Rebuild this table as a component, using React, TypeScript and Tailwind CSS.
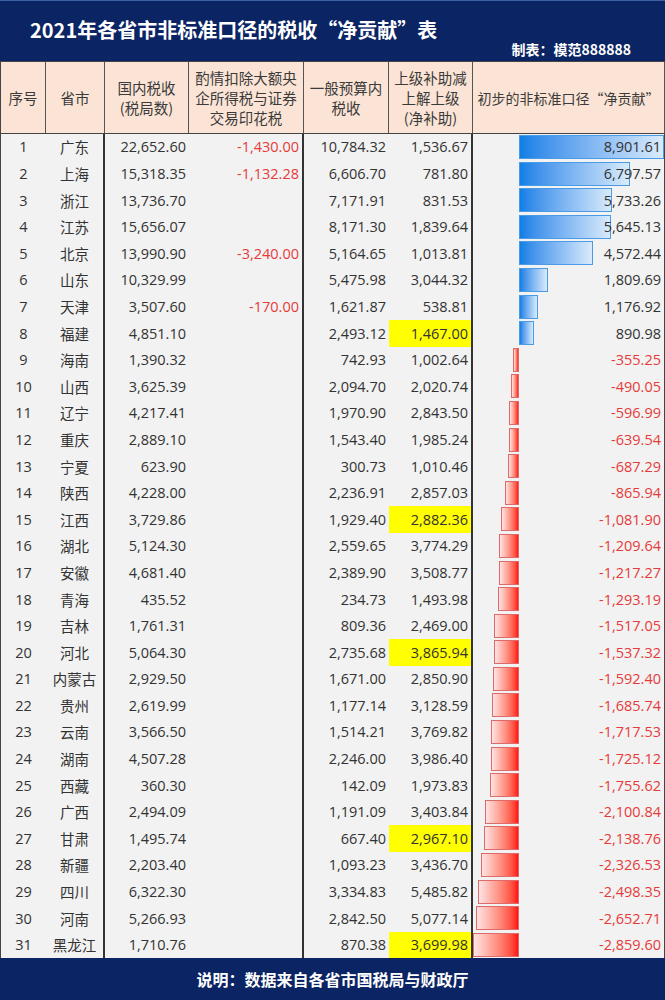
const rows: [number, string, string, string, string, string, boolean, number][] = [
  [1, "广东", "22,652.60", "-1,430.00", "10,784.32", "1,536.67", false, 8901.61],
  [2, "上海", "15,318.35", "-1,132.28", "6,606.70", "781.80", false, 6797.57],
  [3, "浙江", "13,736.70", "", "7,171.91", "831.53", false, 5733.26],
  [4, "江苏", "15,656.07", "", "8,171.30", "1,839.64", false, 5645.13],
  [5, "北京", "13,990.90", "-3,240.00", "5,164.65", "1,013.81", false, 4572.44],
  [6, "山东", "10,329.99", "", "5,475.98", "3,044.32", false, 1809.69],
  [7, "天津", "3,507.60", "-170.00", "1,621.87", "538.81", false, 1176.92],
  [8, "福建", "4,851.10", "", "2,493.12", "1,467.00", true, 890.98],
  [9, "海南", "1,390.32", "", "742.93", "1,002.64", false, -355.25],
  [10, "山西", "3,625.39", "", "2,094.70", "2,020.74", false, -490.05],
  [11, "辽宁", "4,217.41", "", "1,970.90", "2,843.50", false, -596.99],
  [12, "重庆", "2,889.10", "", "1,543.40", "1,985.24", false, -639.54],
  [13, "宁夏", "623.90", "", "300.73", "1,010.46", false, -687.29],
  [14, "陕西", "4,228.00", "", "2,236.91", "2,857.03", false, -865.94],
  [15, "江西", "3,729.86", "", "1,929.40", "2,882.36", true, -1081.9],
  [16, "湖北", "5,124.30", "", "2,559.65", "3,774.29", false, -1209.64],
  [17, "安徽", "4,681.40", "", "2,389.90", "3,508.77", false, -1217.27],
  [18, "青海", "435.52", "", "234.73", "1,493.98", false, -1293.19],
  [19, "吉林", "1,761.31", "", "809.36", "2,469.00", false, -1517.05],
  [20, "河北", "5,064.30", "", "2,735.68", "3,865.94", true, -1537.32],
  [21, "内蒙古", "2,929.50", "", "1,671.00", "2,850.90", false, -1592.4],
  [22, "贵州", "2,619.99", "", "1,177.14", "3,128.59", false, -1685.74],
  [23, "云南", "3,566.50", "", "1,514.21", "3,769.82", false, -1717.53],
  [24, "湖南", "4,507.28", "", "2,246.00", "3,986.40", false, -1725.12],
  [25, "西藏", "360.30", "", "142.09", "1,973.83", false, -1755.62],
  [26, "广西", "2,494.09", "", "1,191.09", "3,403.84", false, -2100.84],
  [27, "甘肃", "1,495.74", "", "667.40", "2,967.10", true, -2138.76],
  [28, "新疆", "2,203.40", "", "1,093.23", "3,436.70", false, -2326.53],
  [29, "四川", "6,322.30", "", "3,334.83", "5,485.82", false, -2498.35],
  [30, "河南", "5,266.93", "", "2,842.50", "5,077.14", false, -2652.71],
  [31, "黑龙江", "1,710.76", "", "870.38", "3,699.98", true, -2859.6],
];

const cols = "grid grid-cols-[45px_59px_84px_115px_85px_84px_1fr]";
const scale = 145 / 8901.61;

const fmt = (n: number) =>
  n.toLocaleString("en-US", { minimumFractionDigits: 2, maximumFractionDigits: 2 });

function Bar({ v }: { v: number }) {
  const w = Math.min(Math.abs(v) * scale, 46);
  if (v >= 0) {
    return (
      <div
        className="absolute top-[1px] h-[24px] border border-[#4a9be6] bg-linear-to-r from-[#0b7fe6] to-[#d9ebfa]"
        style={{ left: 46, width: Math.abs(v) * scale }}
      />
    );
  }
  return (
    <div
      className="absolute top-[1px] h-[24px] border border-[#e06a6a] bg-linear-to-r from-[#ffe3e3] to-[#ff0a0a]"
      style={{ left: 46 - w, width: w }}
    />
  );
}

export default function App() {
  const head = "flex items-center justify-center border-r border-[#555] text-center";
  const num = "flex items-center justify-end pr-[3px]";
  return (
    <div className="flex h-[1000px] w-[665px] flex-col bg-[#0b2463] font-['Noto_Sans_CJK_SC',sans-serif]">
      <div className="flex h-[61px] flex-col border-t border-[#3d5fa3] pt-[16px] text-white">
        <div className="pl-[30px] text-[20px] font-bold leading-[26px]">
          2021年各省市非标准口径的税收“净贡献”表
        </div>
        <div className="-mt-[3px] self-end pr-[34px] text-[14px] font-bold leading-[18px]">
          制表：模范888888
        </div>
      </div>

      <div
        className={`${cols} h-[73px] border-y border-[#444] border-l bg-[#fbe4d5] text-[14.5px] leading-[20px] text-[#3a3a3a]`}
      >
        <div className={head}>序号</div>
        <div className={head}>省市</div>
        <div className={head}>
          国内税收
          <br />
          (税局数)
        </div>
        <div className={head}>
          酌情扣除大额央
          <br />
          企所得税与证券
          <br />
          交易印花税
        </div>
        <div className={head}>
          一般预算内
          <br />
          税收
        </div>
        <div className={head}>
          上级补助减
          <br />
          上解上级
          <br />
          (净补助)
        </div>
        <div className={`${head} text-[14px]`}>初步的非标准口径“净贡献”</div>
      </div>

      <div className="border-l border-r border-[#444] bg-[#f2f2f2] text-[14.5px] text-[#333]">
        {rows.map(([id, name, gn, zq, yb, sj, hl, net]) => (
          <div key={id} className={`${cols} h-[26.6px]`}>
            <div className="flex items-center justify-center font-['Open_Sans',sans-serif]">{id}</div>
            <div className="flex items-center justify-center border-r-2 border-[#333]">{name}</div>
            <div className={`${num} font-['Open_Sans',sans-serif]`}>{gn}</div>
            <div className={`${num} border-r-2 border-[#333] font-['Open_Sans',sans-serif] text-[#e63b3b]`}>
              {zq}
            </div>
            <div className={`${num} font-['Open_Sans',sans-serif]`}>{yb}</div>
            <div
              className={`${num} border-r-2 border-[#333] font-['Open_Sans',sans-serif] ${hl ? "bg-[#ffff00]" : ""}`}
            >
              {sj}
            </div>
            <div className="relative">
              <Bar v={net} />
              <div
                className={`relative flex h-full items-center justify-end pr-[3px] font-['Open_Sans',sans-serif] ${
                  net < 0 ? "text-[#e63b3b]" : "text-[#333]"
                }`}
              >
                {fmt(net)}
              </div>
            </div>
          </div>
        ))}
      </div>

      <div className="flex flex-1 items-center justify-center text-[16px] font-bold text-white">
        说明：数据来自各省市国税局与财政厅
      </div>
    </div>
  );
}
